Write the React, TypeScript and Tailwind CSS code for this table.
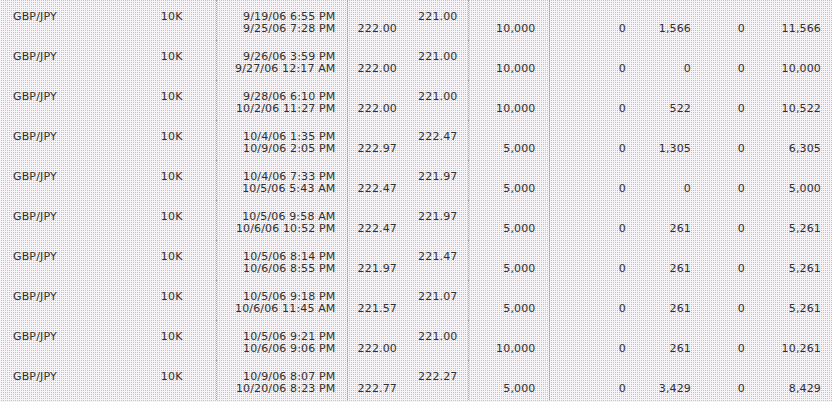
const trades = [
  ['9/19/06 6:55 PM', '9/25/06 7:28 PM', '222.00', '221.00', '10,000', '0', '1,566', '0', '11,566'],
  ['9/26/06 3:59 PM', '9/27/06 12:17 AM', '222.00', '221.00', '10,000', '0', '0', '0', '10,000'],
  ['9/28/06 6:10 PM', '10/2/06 11:27 PM', '222.00', '221.00', '10,000', '0', '522', '0', '10,522'],
  ['10/4/06 1:35 PM', '10/9/06 2:05 PM', '222.97', '222.47', '5,000', '0', '1,305', '0', '6,305'],
  ['10/4/06 7:33 PM', '10/5/06 5:43 AM', '222.47', '221.97', '5,000', '0', '0', '0', '5,000'],
  ['10/5/06 9:58 AM', '10/6/06 10:52 PM', '222.47', '221.97', '5,000', '0', '261', '0', '5,261'],
  ['10/5/06 8:14 PM', '10/6/06 8:55 PM', '221.97', '221.47', '5,000', '0', '261', '0', '5,261'],
  ['10/5/06 9:18 PM', '10/6/06 11:45 AM', '221.57', '221.07', '5,000', '0', '261', '0', '5,261'],
  ['10/5/06 9:21 PM', '10/6/06 9:06 PM', '222.00', '221.00', '10,000', '0', '261', '0', '10,261'],
  ['10/9/06 8:07 PM', '10/20/06 8:23 PM', '222.77', '222.27', '5,000', '0', '3,429', '0', '8,429'],
];

// two stacked lines inside a cell; the first may be empty
function Lines({ top, bottom }: { top?: string; bottom?: string }) {
  return (
    <>
      <div className="h-[12px]">{top}</div>
      <div className="h-[12px]">{bottom}</div>
    </>
  );
}

export default function App() {
  const sep = 'border-r border-dotted border-r-[#a8a2a8]';
  return (
    <div className="w-[832px] h-[402px] overflow-hidden bg-[conic-gradient(#c6c0c6_0_25%,#f7f4f7_0)] bg-[length:2px_2px] text-[11px] leading-[12px] tracking-[0.15px] text-[#303030] font-['DejaVu_Sans',Verdana,sans-serif]">
      <table className="w-[832px] table-fixed border-collapse">
        <colgroup>
          <col className="w-[130px]" />
          <col className="w-[86px]" />
          <col className="w-[131px]" />
          <col className="w-[61px]" />
          <col className="w-[60px]" />
          <col className="w-[81px]" />
          <col className="w-[88px]" />
          <col className="w-[65px]" />
          <col className="w-[52px]" />
          <col className="w-[78px]" />
        </colgroup>
        <tbody>
          {trades.map((t, i) => (
            <tr key={i} className="h-[40px] align-top">
              <td className="pt-[11px] pl-[13px] whitespace-nowrap">GBP/JPY</td>
              <td className={`pt-[11px] pr-[33px] text-right ${sep}`}>10K</td>
              <td className={`pt-[11px] pr-[11px] text-right whitespace-nowrap ${sep}`}>
                <Lines top={t[0]} bottom={t[1]} />
              </td>
              <td className="pt-[11px] pr-[11px] text-right">
                <Lines bottom={t[2]} />
              </td>
              <td className={`pt-[11px] pr-[10px] text-right ${sep}`}>
                <Lines top={t[3]} />
              </td>
              <td className={`pt-[11px] pr-[13px] text-right ${sep}`}>
                <Lines bottom={t[4]} />
              </td>
              <td className="pt-[11px] pr-[11px] text-right">
                <Lines bottom={t[5]} />
              </td>
              <td className="pt-[11px] pr-[11px] text-right">
                <Lines bottom={t[6]} />
              </td>
              <td className="pt-[11px] pr-[9px] text-right">
                <Lines bottom={t[7]} />
              </td>
              <td className="pt-[11px] pr-[11px] text-right">
                <Lines bottom={t[8]} />
              </td>
            </tr>
          ))}
        </tbody>
      </table>
    </div>
  );
}
